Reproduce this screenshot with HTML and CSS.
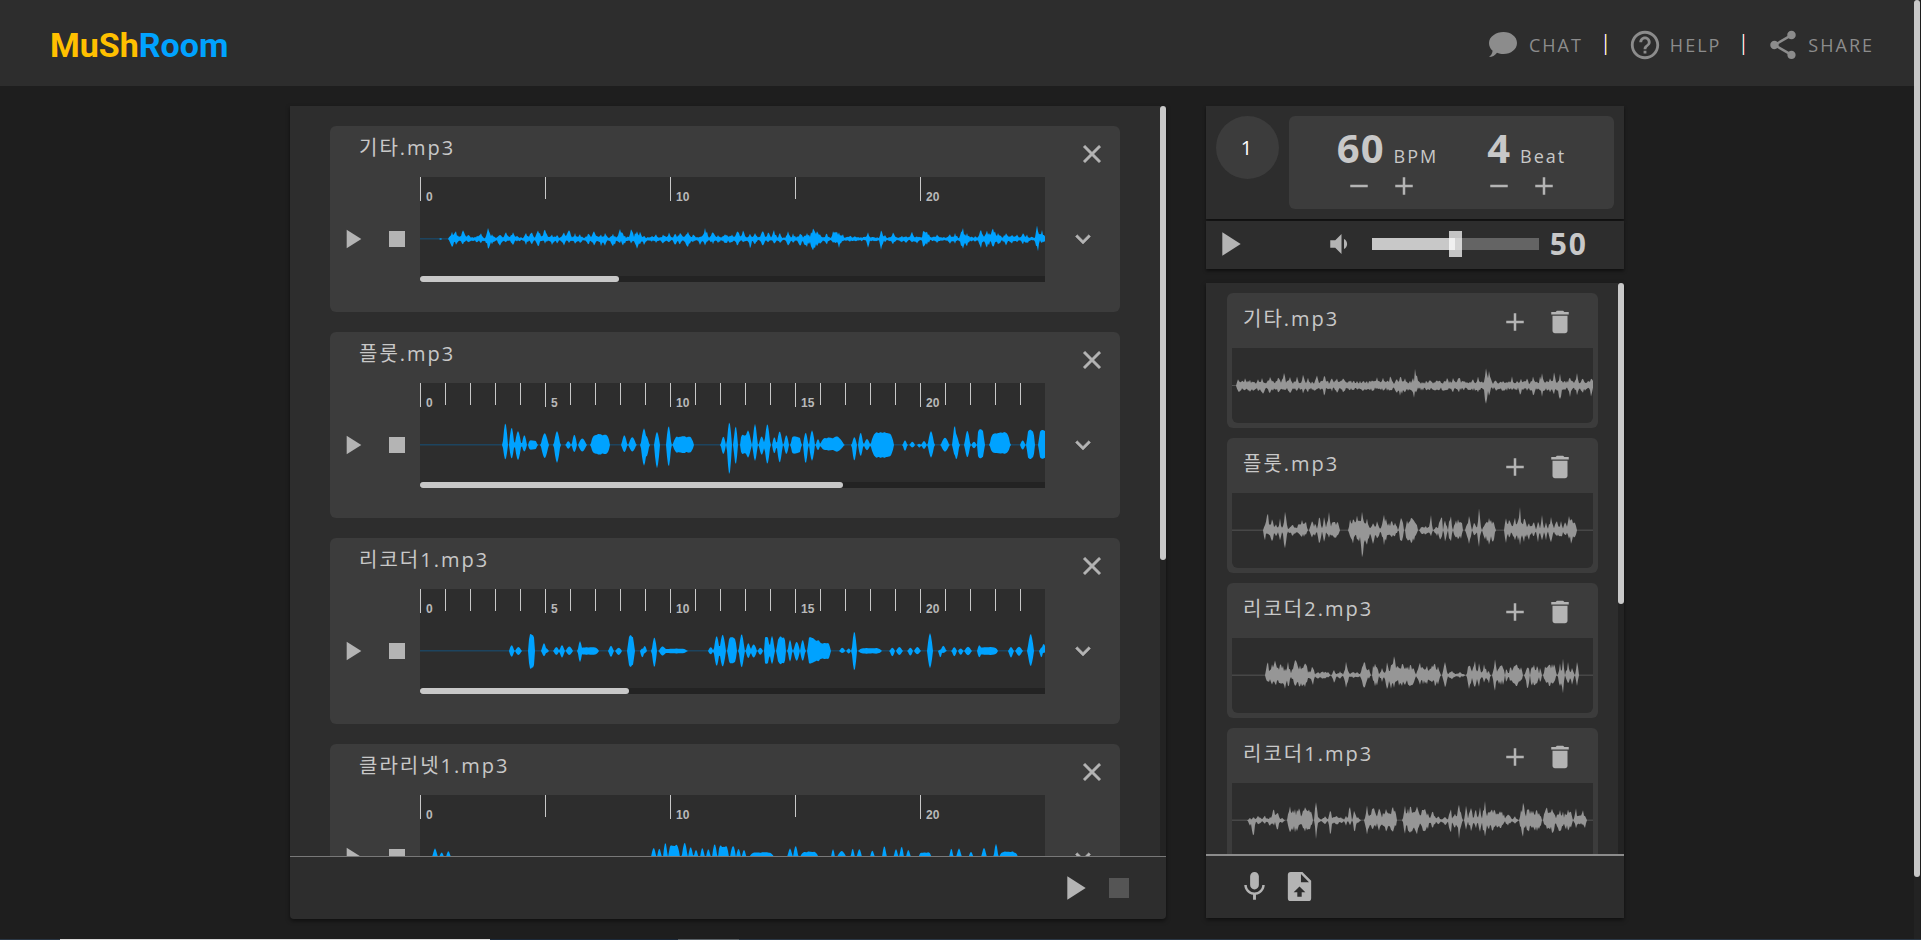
FILE: index.html
```html
<!DOCTYPE html>
<html lang="ko">
<head>
<meta charset="utf-8">
<title>MuShRoom</title>
<link rel="stylesheet" href="styles.css">
</head>
<body>
<svg class="defs" aria-hidden="true">
  <symbol id="i-play" viewBox="0 0 24 24"><path d="M8 5v14l11-7z"/></symbol>
  <symbol id="i-stop" viewBox="0 0 24 24"><path d="M6 6h12v12H6z"/></symbol>
  <symbol id="i-close" viewBox="0 0 24 24"><path d="M19 6.41L17.59 5 12 10.59 6.41 5 5 6.41 10.59 12 5 17.59 6.41 19 12 13.41 17.59 19 19 17.59 13.41 12z"/></symbol>
  <symbol id="i-more" viewBox="0 0 24 24"><path d="M16.59 8.59L12 13.17 7.41 8.59 6 10l6 6 6-6z"/></symbol>
  <symbol id="i-plus" viewBox="0 0 24 24"><path d="M19 13h-6v6h-2v-6H5v-2h6V5h2v6h6v2z"/></symbol>
  <symbol id="i-minus" viewBox="0 0 24 24"><path d="M19 13H5v-2h14v2z"/></symbol>
  <symbol id="i-delete" viewBox="0 0 24 24"><path d="M6 19c0 1.100.9 2 2 2h8c1.100 0 2-.9 2-2V7H6v12zM19 4h-3.500l-1-1h-5l-1 1H5v2h14V4z"/></symbol>
  <symbol id="i-volume" viewBox="0 0 24 24"><path d="M18.500 12c0-1.770-1.020-3.290-2.500-4.030v8.050c1.480-.73 2.500-2.250 2.500-4.020zM5 9v6h4l5 5V4L9 9H5z"/></symbol>
  <symbol id="i-mic" viewBox="0 0 24 24"><path d="M12 14c1.660 0 2.990-1.340 2.990-3L15 5c0-1.660-1.340-3-3-3S9 3.340 9 5v6c0 1.660 1.340 3 3 3zm5.300-3c0 3-2.540 5.100-5.300 5.100S6.700 14 6.700 11H5c0 3.410 2.720 6.230 6 6.720V21h2v-3.280c3.280-.48 6-3.300 6-6.720h-1.700z"/></symbol>
  <symbol id="i-upload" viewBox="0 0 24 24"><path fill-rule="evenodd" d="M14 2H6a2 2 0 0 0-2 2v16a2 2 0 0 0 2 2h12a2 2 0 0 0 2-2V8l-6-6m-.5 14v3h-3v-3H8l4-4 4 4h-2.500M13 9V3.500L18.500 9H13z"/></symbol>
  <symbol id="i-chat" viewBox="0 0 28 26"><path d="M14.500 0C22 0 28 4.700 28 11s-6 11-13.500 11c-2.400 0-4.600-.5-6.500-1.300C6 23.500 3.300 25 0 25c1.900-1.400 3.300-3.400 3.600-6.200C1.300 16.800 0 14 0 11 0 4.700 7 0 14.500 0z"/></symbol>
  <symbol id="i-help" viewBox="0 0 24 24"><path d="M11 18h2v-2h-2v2zm1-16C6.480 2 2 6.480 2 12s4.480 10 10 10 10-4.480 10-10S17.520 2 12 2zm0 18c-4.410 0-8-3.590-8-8s3.590-8 8-8 8 3.590 8 8-3.590 8-8 8zm0-14c-2.210 0-4 1.790-4 4h2c0-1.100.9-2 2-2s2 .9 2 2c0 2-3 1.750-3 5h2c0-2.250 3-2.500 3-5 0-2.210-1.790-4-4-4z"/></symbol>
  <symbol id="i-share" viewBox="0 0 24 24"><path d="M18 16.080c-.76 0-1.440.3-1.960.77L8.910 12.700c.05-.23.09-.46.09-.7s-.04-.47-.09-.7l7.050-4.110c.54.5 1.250.81 2.040.81 1.660 0 3-1.340 3-3s-1.340-3-3-3-3 1.340-3 3c0 .24.04.47.09.7L8.040 9.810C7.500 9.310 6.790 9 6 9c-1.660 0-3 1.340-3 3s1.340 3 3 3c.79 0 1.500-.31 2.040-.81l7.120 4.160c-.05.21-.08.43-.08.65 0 1.610 1.310 2.920 2.920 2.920s2.920-1.310 2.920-2.920-1.310-2.920-2.920-2.920z"/></symbol>
</svg>

<header class="topbar">
  <h1 class="logo"><span class="logo-mush">MuSh</span><span class="logo-room">Room</span></h1>
  <nav class="menu">
    <a class="menu-link" href="#chat"><svg class="icon-chat"><use href="#i-chat"/></svg>CHAT</a>
    <span class="menu-sep sep-gold"></span>
    <a class="menu-link" href="#help"><svg class="icon-menu"><use href="#i-help"/></svg>HELP</a>
    <span class="menu-sep sep-red"></span>
    <a class="menu-link" href="#share"><svg class="icon-menu"><use href="#i-share"/></svg>SHARE</a>
  </nav>
</header>

<main class="workspace">
  <section class="panel mixer">
    <div class="scroll-area">
      <div class="track-list" id="tracks"></div>
      <div class="scrollbar"><div class="scroll-thumb" style="height:60.500%"></div></div>
    </div>
    <footer class="mixer-footer">
      <button class="btn btn-lg" aria-label="Play all"><svg class="icon-lg"><use href="#i-play"/></svg></button>
      <button class="btn btn-lg" aria-label="Stop all" disabled><svg class="icon-lg"><use href="#i-stop"/></svg></button>
    </footer>
  </section>

  <div class="side">
    <section class="metronome">
      <div class="metro-top">
        <div class="beat-dot">1</div>
        <div class="tempo">
          <div class="tempo-group">
            <div class="tempo-value"><strong class="num">60</strong><span class="unit">BPM</span></div>
            <div class="tempo-buttons">
              <button class="btn" aria-label="BPM down"><svg class="icon"><use href="#i-minus"/></svg></button>
              <button class="btn" aria-label="BPM up"><svg class="icon"><use href="#i-plus"/></svg></button>
            </div>
          </div>
          <div class="tempo-group">
            <div class="tempo-value"><strong class="num">4</strong><span class="unit">Beat</span></div>
            <div class="tempo-buttons">
              <button class="btn" aria-label="Beat down"><svg class="icon"><use href="#i-minus"/></svg></button>
              <button class="btn" aria-label="Beat up"><svg class="icon"><use href="#i-plus"/></svg></button>
            </div>
          </div>
        </div>
      </div>
      <div class="metro-bottom">
        <button class="btn" aria-label="Play metronome"><svg class="icon-lg"><use href="#i-play"/></svg></button>
        <label class="volume-label" for="volume" aria-label="Volume"><svg class="icon"><use href="#i-volume"/></svg></label>
        <input class="volume" id="volume" type="range" min="0" max="100" value="50">
        <output class="volume-value" for="volume">50</output>
      </div>
    </section>

    <section class="panel library">
      <div class="scroll-area">
        <div class="clip-list" id="clips"></div>
        <div class="scrollbar"><div class="scroll-thumb" style="height:56.300%"></div></div>
      </div>
      <footer class="library-footer">
        <button class="btn" aria-label="Record"><svg class="icon-md"><use href="#i-mic"/></svg></button>
        <button class="btn" aria-label="Upload file"><svg class="icon-md"><use href="#i-upload"/></svg></button>
      </footer>
    </section>
  </div>
</main>
<div class="page-scrollbar"><div class="page-thumb"></div></div>
<div class="bottom-edge"></div>
<script src="waves.js"></script>
</body>
</html>
```

FILE: styles.css
```css
* { box-sizing: border-box; }

body {
  margin: 0;
  min-height: 100vh;
  padding-right: 7px;
  overflow: hidden;
  background: #1e1e1e;
  color: #c8c8c8;
  font-family: "Open Sans", "Noto Sans CJK KR", sans-serif;
  font-size: 20px;
  letter-spacing: 2px;
}

.defs { display: none; }

svg { display: block; fill: #b4b4b4; }
.icon { width: 30px; height: 30px; }
.icon-sm { width: 32px; height: 32px; }
.icon-md { width: 35px; height: 35px; }
.icon-lg { width: 40px; height: 40px; }

.btn {
  display: flex;
  align-items: center;
  justify-content: center;
  width: 45px;
  padding: 0;
  border: 0;
  background: none;
  cursor: pointer;
}
.btn:disabled svg { fill: #555555; }

/* header */
.topbar {
  display: flex;
  align-items: center;
  justify-content: space-between;
  height: 86px;
  padding: 3px 40px 0 50px;
  background: #2d2d2d;
}
.logo {
  margin: 0;
  font: bold 34px/48px Roboto, sans-serif;
  letter-spacing: normal;
}
.logo-mush { color: #ffc000; }
.logo-room { color: #00a2ff; }
.menu { display: flex; align-items: center; gap: 21px; }
.menu-link {
  display: flex;
  align-items: center;
  gap: 8px;
  color: #8c8c8c;
  font-size: 18px;
  line-height: 28px;
  text-decoration: none;
}
.menu-link svg { fill: #8c8c8c; }
.icon-chat { width: 28px; height: 26px; margin-right: 4px; }
.icon-menu { width: 34px; height: 34px; }
.menu-sep { width: 3px; height: 21px; }
.sep-gold { background: linear-gradient(90deg, #3c3ca0 1px, #e6e6c8 1px 2px, #a07d28 2px); }
.sep-red { background: linear-gradient(90deg, #28788c 1px, #f0dcc8 1px 2px, #963c3c 2px); }

/* layout */
.workspace {
  display: grid;
  grid-template-columns: minmax(0, 1fr) 418px;
  gap: 40px;
  max-width: 1334px;
  height: calc(100vh - 86px);
  margin: 0 auto;
  padding: 20px 0 21px;
}
.panel {
  display: flex;
  flex-direction: column;
  min-height: 0;
  background: #2d2d2d;
  box-shadow: 0 2px 4px rgba(0, 0, 0, 0.5);
}
.scroll-area { display: flex; flex: 1; min-height: 0; }
.scrollbar { width: 6px; background: #232323; }
.scroll-thumb { border-radius: 3px; background: #c8c8c8; }

/* mixer */
.mixer { border-radius: 0 0 4px 4px; }
.track-list {
  display: flex;
  flex: 1;
  flex-direction: column;
  gap: 20px;
  min-width: 0;
  padding: 20px 40px;
  overflow: hidden;
}
.track {
  flex: none;
  padding-bottom: 30px;
  border-radius: 6px;
  background: #3c3c3c;
}
.track-head {
  display: flex;
  align-items: flex-start;
  justify-content: space-between;
  height: 51px;
  padding: 8px 6px 0 29px;
}
.track-title, .clip-title { margin: 0; font-size: 20px; font-weight: 400; line-height: 28px; white-space: nowrap; }
.track-head .btn { padding-top: 5px; }
.track-head svg, .btn-more svg { stroke: #b4b4b4; stroke-width: 0.4px; }
.track-body { display: grid; grid-template-columns: 45px 45px minmax(0, 1fr) 75px; }
.track-body .btn { padding: 19px 2px 0 0; }
.track-body .btn-more { width: 75px; padding-right: 0; }
.track-view { position: relative; height: 105px; background: #2d2d2d; }
.ruler { display: flex; height: 30px; overflow: hidden; }
.tick {
  flex: none;
  height: 30px;
  background: linear-gradient(#c8c8c8, #c8c8c8) 0 0 / 1px 22px no-repeat;
  white-space: nowrap;
}
.tick-main {
  padding: 13px 0 0 6px;
  background-size: 1px 24px;
  font: bold 12px/14px "Liberation Sans", sans-serif;
  letter-spacing: normal;
  color: #b9b9b9;
}
.tick-1s { width: 25px; }
.tick-5s { width: 125px; }
.wave { position: absolute; inset: 0; width: 100%; height: 100%; }
.wave-blue { fill: #00a2ff; }
.wave-blue .axis { fill: #17517a; }
.wave-gray { fill: #969696; }
.wave-gray .axis { fill: #555555; }
.hbar { position: absolute; inset: auto 0 0 0; height: 6px; background: #232323; }
.hbar-thumb { height: 6px; border-radius: 3px; background: #c8c8c8; }
.mixer-footer {
  display: flex;
  align-items: center;
  justify-content: flex-end;
  height: 63px;
  padding-right: 25px;
  border-top: 1px solid #787878;
}

/* metronome */
.side { display: flex; flex-direction: column; gap: 14px; min-height: 0; padding-bottom: 1px; }
.metro-top, .metro-bottom { display: flex; background: #2d2d2d; box-shadow: 0 2px 3px rgba(0, 0, 0, 0.5); }
.metronome { display: flex; flex-direction: column; gap: 2px; }
.metro-top { gap: 10px; padding: 10px; }
.beat-dot {
  display: flex;
  align-items: center;
  justify-content: center;
  width: 63px;
  height: 63px;
  border-radius: 50%;
  background: #3c3c3c;
  color: #ffffff;
}
.tempo {
  display: flex;
  flex: 1;
  justify-content: center;
  gap: 38px;
  height: 93px;
  padding-top: 8px;
  border-radius: 6px;
  background: #3c3c3c;
}
.tempo-value { display: flex; align-items: baseline; justify-content: flex-end; gap: 9px; height: 47px; line-height: 48px; }
.num { font-size: 40px; line-height: 48px; letter-spacing: 1px; }
.unit { font-size: 18px; }
.tempo-buttons { display: flex; }
.metro-bottom { align-items: center; height: 48px; padding-bottom: 2px; }
.volume-label { margin-left: auto; }
.volume {
  appearance: none;
  width: 167px;
  height: 12px;
  margin: 0 11px 0 18px;
  background: linear-gradient(90deg, #c8c8c8 50%, #646464 50%);
}
.volume::-webkit-slider-thumb {
  appearance: none;
  width: 13px;
  height: 26px;
  background: rgba(255, 255, 255, 0.72);
}
.volume-value { padding-right: 36px; font-size: 30px; font-weight: 700; line-height: 40px; }

/* library */
.library { flex: 1; }
.clip-list {
  display: flex;
  flex: 1;
  flex-direction: column;
  gap: 10px;
  min-width: 0;
  padding: 10px 20px 10px 21px;
  overflow: hidden;
}
.clip { flex: none; padding: 0 5px 5px; border-radius: 6px; background: #3c3c3c; }
.clip-head { display: flex; align-items: center; height: 55px; padding: 0 11px; }
.clip-title { flex: 1; padding-bottom: 4px; }
.clip-head .btn { padding-top: 3px; }
.clip-view { position: relative; height: 75px; border-radius: 0 0 6px 6px; background: #2d2d2d; }
.library-footer {
  display: flex;
  align-items: center;
  height: 64px;
  padding: 0 0 2px 26px;
  border-top: 2px solid #8c8c8c;
}

.page-scrollbar { position: fixed; inset: 0 1px 0 auto; width: 6px; background: #232323; }
.page-thumb { height: 877px; border-radius: 3px; background: #c8c8c8; }
.bottom-edge {
  position: fixed;
  inset: auto 0 0 0;
  height: 1px;
  background: linear-gradient(90deg, #2b3846 60px, #dcdcdc 60px 490px, #1c2a3a 490px 678px, #5a6268 678px 739px, #2b3846 739px);
}
```

FILE: waves.js
```js
// Each burst is "centre width up down", with a trailing b for a flat-topped one.
// A part is an x offset followed by its bursts.
const WAVES = {
  guitar: { rough: true, base: 5, from: 88, to: 1875, width: 1875, height: 315, mid: 186, parts: [
    [-420, "482 6 4 4;516 20 22 24;527 20 24 18;549 22 26 16;565 22 12 10;590 20 10 10;602 20 18 12;625 18 34 30;636 22 14 16;660 22 12 20;678 20 20 10;699 20 20 18;712 20 10 8;738 18 18 18;755 20 20 16;775 20 26 22;795 22 28 14;815 22 14 18;830 18 12 14;851 20 20 20;867 20 26 12;885 20 18 14;900 20 14 12;925 20 16 16;943 20 24 20;962 18 14 22;975 18 18 20;1000 22 16 22;1020 22 30 12;1030 18 16 20;1054 16 30 14;1070 20 24 30;1080 20 22 16;1092 16 10 18;1115 20 10 8;1128 20 14 12;1150 20 14 14;1166 18 20 10;1186 18 16 18;1200 20 18 16;1223 22 22 24;1240 18 14 10;1262 14 16 22;1276 18 34 20;1298 22 20 16;1315 20 12 12;1340 24 12 12;1355 20 14 10;1373 20 22 18"],
    [900, "15 20 14 12;30 20 10 12;52 18 22 20;70 16 26 10;90 14 16 28;105 16 18 16;128 18 24 20;145 16 20 10;163 16 28 14;180 14 18 12;205 18 24 20;220 16 18 12;240 26 16 20;260 28 18 24;280 26 32 34;290 22 24 22;300 20 14 14;320 24 16 16;340 16 24 12;349 12 44 20;358 16 20 28;367 14 18 10;390 24 10 8;405 20 8 6;444 12 20 26;460 14 8 8;484 12 34 38;495 14 12 10;520 16 20 16;545 20 10 10;558 16 8 12;576 14 22 10;590 18 8 14;613 14 38 34;622 18 22 18;650 20 14 12;665 14 6 8;690 20 14 14;705 18 18 14;728 18 34 30;740 22 18 22;765 20 8 8;782 18 28 28;802 22 26 26;820 26 32 24;835 24 18 16;857 20 18 20;875 20 12 14;890 18 14 10;910 16 18 16;920 12 14 22;952 14 42 46;965 16 28 12;972 14 12 10"] ] },
  flute: { width: 1875, height: 315, mid: 186, parts: [
    [-420, "676 14 67 45;695 14 54 42;714 18 42 46;733 14 30 20;758 26 14 14 b;794 22 36 40;831 18 42 54;865 14 12 12;883 14 32 22;907 24 20 20;961 56 32 28 b;1033 16 30 22;1057 22 24 20;1092 18 50 62;1100 14 26 34;1131 16 40 70;1166 14 58 66;1210 62 26 24 b"],
    [900, "10 14 26 28;28 14 70 90;47 12 58 60;72 20 32 28 b;84 20 44 38;105 14 64 48;125 16 26 30;142 16 64 58;163 12 24 26;179 16 42 54;199 14 30 28;228 30 26 26 b;257 14 38 56;276 16 44 48;294 12 18 16;330 56 22 16 b;350 44 26 20;403 14 24 48;422 14 38 34;441 18 18 16;487 68 38 38 b;555 12 14 18;577 14 10 8;598 10 4 8;612 14 12 12;633 18 42 38;675 24 22 20;704 12 60 30;709 16 30 44;742 16 44 38;762 14 10 10;782 20 50 42 b;840 60 38 26 b;908 14 14 14;932 22 46 42 b;968 22 46 42 b"] ] },
  recorder: { width: 1875, height: 315, mid: 186, parts: [
    [-420, "695 14 18 18;715 18 12 12;755 18 50 52 b;792 14 24 16;798 16 8 6;829 16 12 12;846 14 18 20;868 20 14 12;900 12 30 34;927 56 12 12 b;993 14 16 18;1016 18 10 12;1053 18 46 46 b;1087 12 8 20;1094 12 16 6;1123 14 42 50;1148 22 14 14;1180 84 7 7 b;1292 14 12 10;1310 16 46 46;1328 18 48 48;1356 24 40 36 b"],
    [900, "8 18 50 48;37 24 40 36 b;65 16 52 50;85 14 24 22;101 18 20 20;121 14 10 12;140 14 42 38 b;156 14 46 40;184 26 42 38 b;210 12 34 32;230 18 28 30;248 14 34 30;274 20 42 38 b;290 24 34 32 b;312 38 25 25 b;367 16 10 6;386 12 8 8;403 14 60 60;450 68 9 8 b;517 14 10 16;538 18 12 12;571 14 10 14;592 18 12 10;630 16 54 52;661 10 4 20;670 16 16 6;703 14 12 16;722 14 8 12;744 20 13 13;778 12 18 20;803 60 12 12 b;873 14 12 20;897 20 13 15;932 18 52 46;964 10 10 20;971 14 22 6"] ] },
  clarinet: { width: 1875, height: 315, mid: 186, parts: [
    [-420, "465 14 26 26;485 12 14 14;505 12 18 18;1121 14 28 28;1138 12 26 26;1156 12 44 40;1182 32 36 30 b;1214 16 44 40;1232 14 30 30;1248 12 22 22;1267 12 28 28;1285 12 24 24;1304 14 40 40;1330 30 34 34 b;1358 14 32 30;1375 12 24 24"],
    [900, "8 26 34 34 b;40 14 34 34;56 12 24 24;72 12 22 22;125 72 14 14 b;210 14 26 26;227 14 34 34;268 52 16 16 b;339 10 24 24;365 26 18 18;398 10 26 26;418 14 24 24;457 12 20 20;493 12 34 34;528 12 24 24;545 12 32 32;565 12 22 22;615 36 14 14 b;694 10 26 26;717 14 26 26;753 12 16 16;792 14 28 28;828 12 40 40;866 54 16 16 b"] ] },
  guitarClip: { rough: true, base: 11, from: 14, to: 1083, width: 1083, height: 225, mid: 113, parts: [
    [-126, "146 14 30 22;165 20 22 14;180 18 18 18;205 20 20 16;218 14 26 34;240 22 26 22;265 24 24 20;281 14 42 18;300 20 26 22;320 16 28 16;340 16 34 24;355 18 24 20;380 12 34 18;403 10 34 32;425 18 22 18;440 22 22 22;460 22 22 20;480 20 12 14;500 20 14 12;520 20 12 16;545 20 16 16;560 12 32 16;580 18 24 16;602 8 46 18;620 16 20 22;632 14 30 36;645 18 22 20;670 10 30 46;677 10 64 34;720 20 16 12;740 20 16 12;772 12 30 18;790 16 24 20;806 14 34 22;820 14 26 18;850 18 20 16;865 16 28 20;888 14 52 54;897 16 44 30;920 14 10 14;940 14 16 10;966 12 28 14;992 12 22 32;1010 16 22 16;1030 16 28 30;1055 20 38 34;1080 20 22 20;1092 14 40 26;1110 16 36 40;1140 18 24 34;1162 10 42 46;1178 12 26 26;1204 8 46 54"] ] },
  fluteClip: { rough: true, width: 1083, height: 225, mid: 112, parts: [
    [-126, "225 10 16 30;233 14 56 24;245 18 34 34;258 16 18 18;270 12 36 30;285 14 56 54;308 34 16 16;337 28 32 20 b;367 16 28 22;375 14 20 16;388 12 50 58;402 12 40 34;416 12 58 34;433 32 28 24 b;481 8 40 30;488 14 48 62;500 18 46 28;508 20 30 34;517 14 62 86;530 20 36 44;548 18 22 42;562 18 28 24;583 22 48 46;605 36 28 20 b;634 14 58 42;664 36 36 36 b;708 36 14 12 b;723 10 46 18;739 14 14 20;752 12 72 48;766 12 38 36;781 12 52 40;804 26 38 30 b;836 18 44 42;854 12 36 18;867 12 66 50;897 36 36 42 b;948 10 36 38;958 16 32 22;975 22 38 30;989 18 72 46;1003 16 36 36;1018 18 22 30;1031 12 36 20;1044 12 26 36;1056 12 46 30;1068 12 24 30;1083 16 40 36;1100 20 28 18;1112 14 32 34;1126 14 28 18;1138 14 46 30;1145 12 52 54;1154 10 30 28"] ] },
  recorder2Clip: { rough: true, width: 1083, height: 225, mid: 112, parts: [
    [-126, "233 12 44 42;245 16 34 28;256 14 52 42;272 22 36 28 b;285 12 20 40;295 16 42 34;316 26 46 32;330 26 32 36 b;344 18 34 34 b;358 14 14 12;368 12 34 34;385 26 10 10;405 30 12 10 b;432 14 16 22;450 22 12 10;469 16 42 38;490 44 10 8 b;522 18 40 38 b;536 8 32 14;556 18 36 34 b;576 18 22 20;592 18 40 42;603 16 30 40;613 24 58 38;635 30 36 34 b;660 34 30 32 b;690 24 38 28;710 30 32 30 b;735 30 34 32 b;765 16 40 36;785 30 14 12;810 30 10 8;838 14 42 44;854 18 44 36;867 14 36 34;883 18 34 22;895 10 18 34;915 14 48 46;932 22 30 30 b;950 8 30 32;962 10 30 32;980 34 32 32 b;1012 14 44 44;1033 24 36 34 b;1051 8 26 26;1066 12 28 30;1078 32 34 34 b;1093 10 42 20;1110 12 36 32;1119 10 50 54;1134 14 40 24;1146 14 22 28;1161 10 40 32"] ] },
  recorder1Clip: { rough: true, width: 1083, height: 225, mid: 112, parts: [
    [-126, "180 12 8 16;190 12 14 54;205 24 14 12;225 20 14 10;240 16 10 16;250 12 44 18;262 12 30 44;275 18 8 8;300 16 42 36;315 22 34 36 b;328 12 48 26;345 20 38 32 b;358 18 34 28 b;378 10 54 56;385 20 10 8;405 20 12 12;421 10 52 46;440 44 12 12 b;468 10 14 16;479 10 48 20;494 10 40 46;503 18 10 8;532 16 46 44;550 22 38 28 b;568 20 36 32;588 22 34 34 b;608 24 40 34 b;645 12 44 40;660 22 40 36 b;680 26 42 42;705 26 34 32 b;728 24 26 22;745 20 12 12;765 24 10 14;781 10 42 46;795 22 20 22;808 16 48 58;828 10 44 28;842 16 38 34;858 16 32 24;870 12 40 34;884 16 60 50;905 28 34 32 b;930 28 28 24 b;955 24 18 16;975 20 12 10;998 20 54 50;1018 22 34 34 b;1040 28 34 36 b;1070 20 40 28 b;1085 22 34 36 b;1110 24 34 34 b;1135 22 34 32 b;1158 12 36 24;1168 12 28 18;1177 10 42 18;1184 8 28 36"] ] }
};

const STEP = 3;

function noise(n) {
  const v = Math.sin(n * 12.9898) * 43758.5453;
  return v - Math.floor(v);
}

function wavePath(wave) {
  const count = Math.ceil(wave.width / STEP) + 1;
  const up = new Array(count).fill(0);
  const down = new Array(count).fill(0);
  for (let i = 0; i < count; i++) {
    const x = i * STEP;
    if (wave.base && x >= wave.from && x <= wave.to) {
      up[i] = wave.base * (0.4 + noise(i));
      down[i] = wave.base * (0.4 + noise(i + 900));
    }
  }
  for (const [offset, list] of wave.parts) {
    for (const item of list.split(";")) {
      const [c, w, u, d, flat] = item.split(" ");
      const centre = Number(c) + offset;
      const half = Number(w) / 2 + 1;
      const first = Math.max(0, Math.ceil((centre - half) / STEP));
      const last = Math.min(count - 1, Math.floor((centre + half) / STEP));
      for (let i = first; i <= last; i++) {
        const t = Math.abs(i * STEP - centre) / half;
        let shape = flat ? (1 - t ** 6) * (0.88 + 0.16 * noise(i >> 1)) : 1 - t ** 1.6;
        let upShape = shape;
        let downShape = shape;
        if (wave.rough && t > 0.12) {
          upShape *= 0.45 + 0.55 * noise(i + centre);
          downShape *= 0.45 + 0.55 * noise(i + centre + 400);
        }
        up[i] = Math.max(up[i], u * upShape);
        down[i] = Math.max(down[i], d * downShape);
      }
    }
  }
  const top = up.map((v, i) => `${i * STEP} ${(wave.mid - v).toFixed(1)}`);
  const bottom = down.map((v, i) => `${i * STEP} ${(wave.mid + v).toFixed(1)}`).reverse();
  return `M${top.join("L")}L${bottom.join("L")}z`;
}

function waveSvg(name, color) {
  const w = WAVES[name];
  return `<svg class="wave wave-${color}" viewBox="0 0 ${w.width} ${w.height}" preserveAspectRatio="none" aria-hidden="true">
    <rect class="axis" y="${w.mid - 2}" width="${w.width}" height="3"/><path d="${wavePath(w)}"/></svg>`;
}

function ruler(step) {
  let html = "";
  for (let s = 0; s < 25; s += step) {
    const labelled = step === 1 ? s % 5 === 0 : s % 10 === 0;
    html += `<span class="tick tick-${step}s${labelled ? " tick-main" : ""}">${labelled ? s : ""}</span>`;
  }
  return html;
}

function button(icon, size, label, extra = "") {
  return `<button class="btn ${extra}" aria-label="${label}"><svg class="${size}"><use href="#i-${icon}"/></svg></button>`;
}

const tracks = [
  { title: "기타.mp3", wave: "guitar", step: 5, shown: 31.8 },
  { title: "플룻.mp3", wave: "flute", step: 1, shown: 67.7 },
  { title: "리코더1.mp3", wave: "recorder", step: 1, shown: 33.4 },
  { title: "클라리넷1.mp3", wave: "clarinet", step: 5, shown: 40 }
];

document.getElementById("tracks").innerHTML = tracks.map(t => `
  <article class="track">
    <div class="track-head"><h2 class="track-title">${t.title}</h2>${button("close", "icon", "Remove")}</div>
    <div class="track-body">
      ${button("play", "icon-sm", "Play")}${button("stop", "icon-sm", "Stop")}
      <div class="track-view">
        <div class="ruler">${ruler(t.step)}</div>
        ${waveSvg(t.wave, "blue")}
        <div class="hbar"><div class="hbar-thumb" style="width:${t.shown}%"></div></div>
      </div>
      ${button("more", "icon", "More", "btn-more")}
    </div>
  </article>`).join("");

const clips = [
  ["기타.mp3", "guitarClip"],
  ["플룻.mp3", "fluteClip"],
  ["리코더2.mp3", "recorder2Clip"],
  ["리코더1.mp3", "recorder1Clip"]
];

document.getElementById("clips").innerHTML = clips.map(([title, wave]) => `
  <article class="clip">
    <div class="clip-head"><h2 class="clip-title">${title}</h2>${button("plus", "icon", "Add")}${button("delete", "icon", "Delete")}</div>
    <div class="clip-view">${waveSvg(wave, "gray")}</div>
  </article>`).join("");
```
